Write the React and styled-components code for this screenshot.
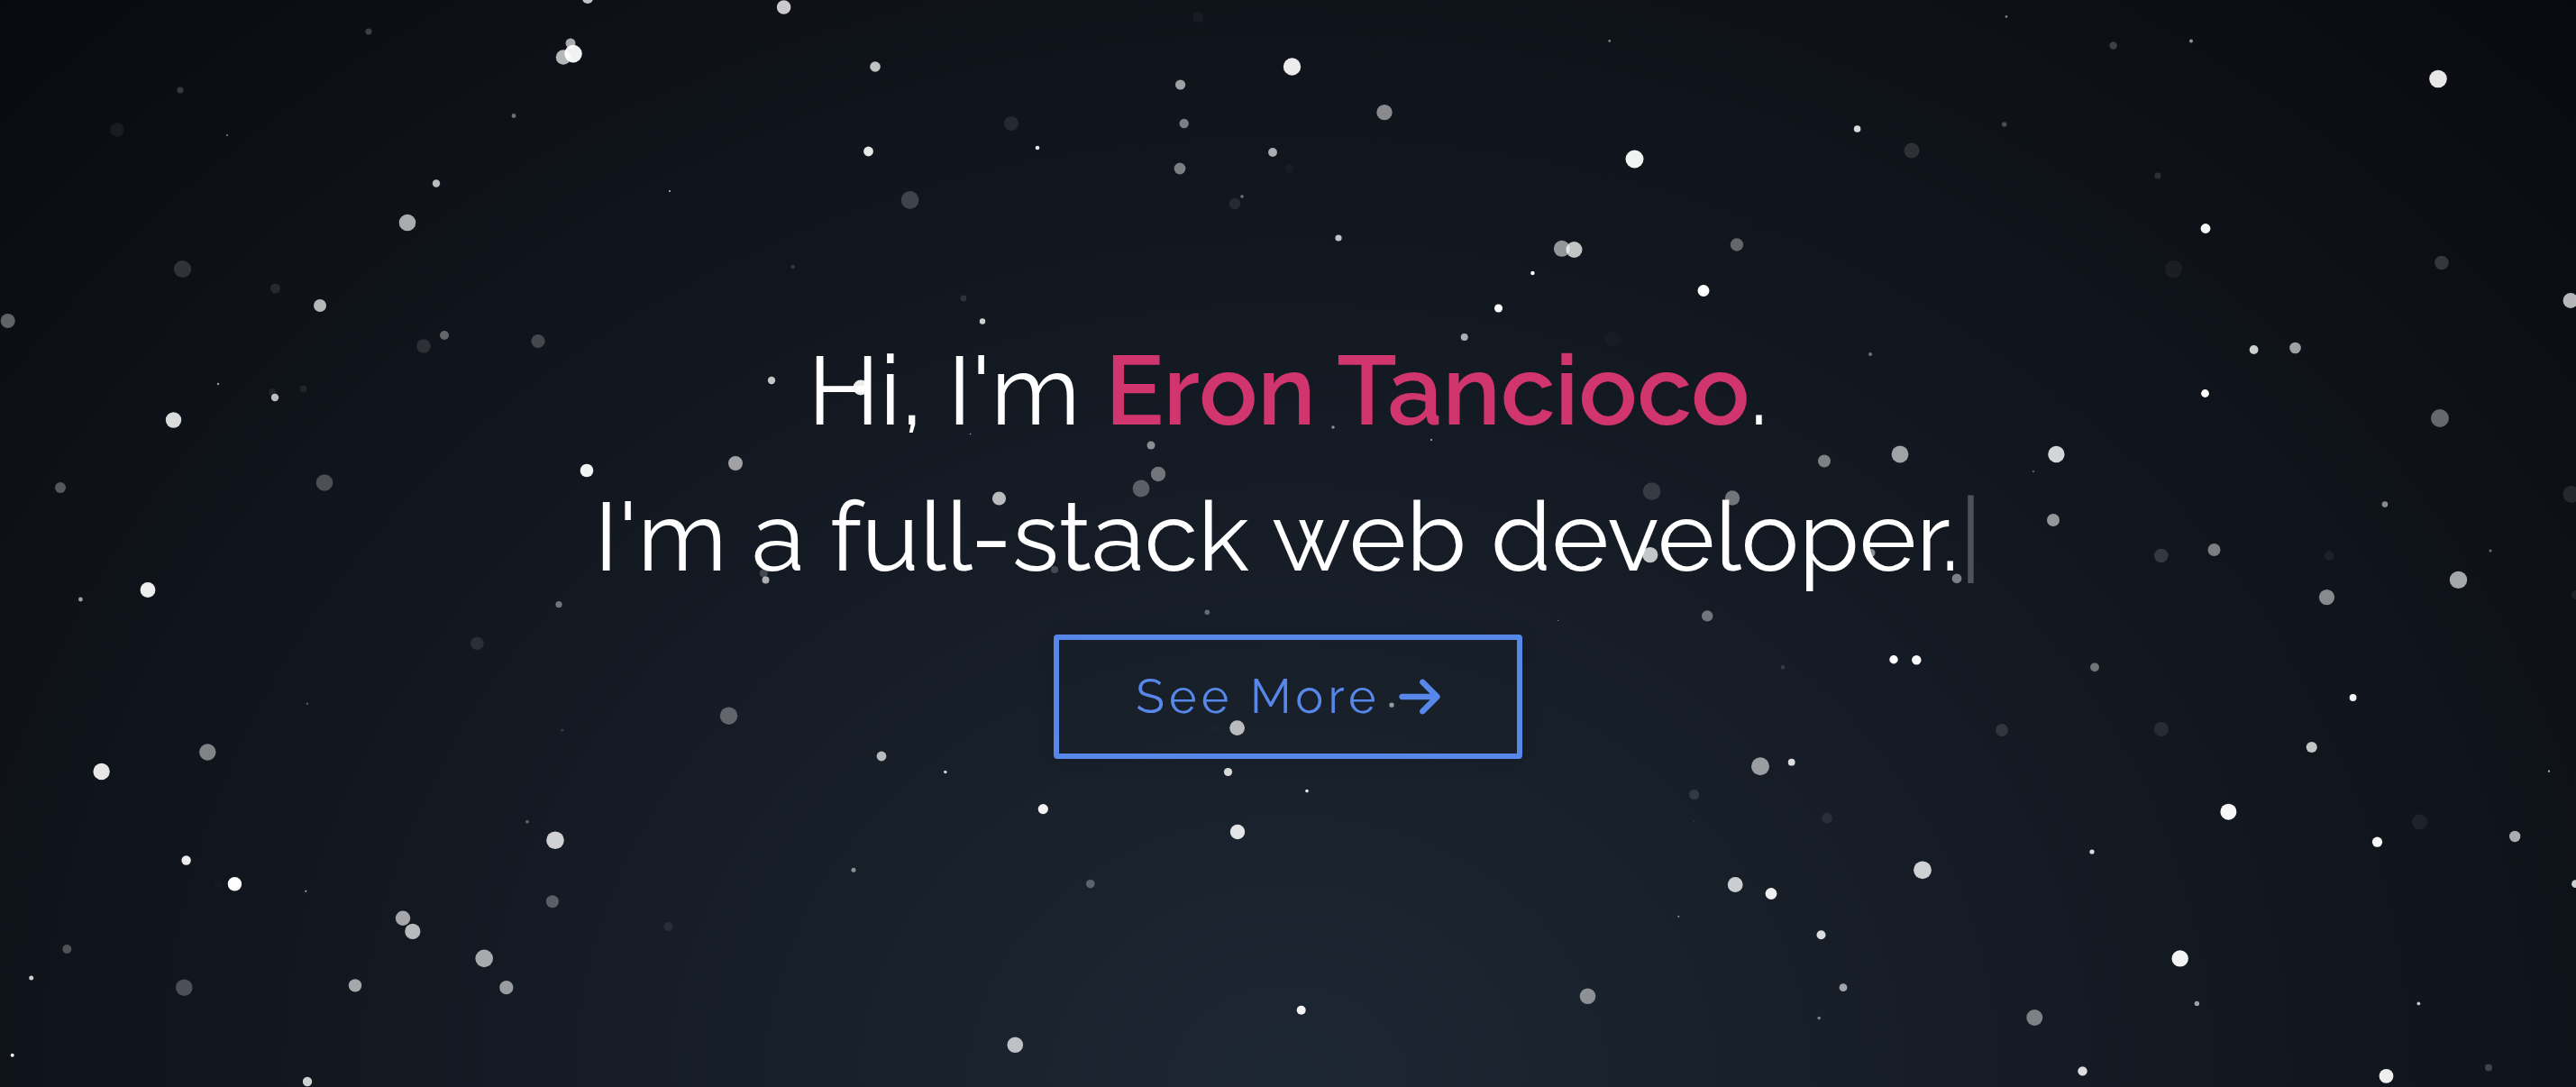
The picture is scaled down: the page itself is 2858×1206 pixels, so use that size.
import React from "react";
import styled, { createGlobalStyle } from "styled-components";
import { FaArrowRight } from "react-icons/fa6";

const GlobalStyle = createGlobalStyle`
  *, *::before, *::after {
    box-sizing: border-box;
  }

  body {
    margin: 0;
    background: #090a0f;
    font-family: Raleway, Lato, "Open Sans", sans-serif;
  }
`;

const Hero = styled.section`
  position: relative;
  display: flex;
  flex-direction: column;
  align-items: center;
  justify-content: center;
  gap: 28px;
  min-height: 100vh;
  padding-bottom: 12px;
  overflow: hidden;
  background: radial-gradient(ellipse at bottom, #1d2733 0%, #090a0f 100%);
`;

const Sky = styled.svg`
  position: absolute;
  inset: 0;
  width: 100%;
  height: 100%;
  pointer-events: none;
`;

const Title = styled.h1`
  position: relative;
  margin: 0;
  color: #fff;
  font-size: 108px;
  font-weight: 400;
  line-height: 162px;
  text-align: center;
`;

const Line = styled.span`
  display: block;
`;

const Name = styled.span`
  color: #d1356e;
  font-weight: 600;
`;

const Cursor = styled.span`
  opacity: 0.25;
`;

const MoreButton = styled.button`
  position: relative;
  display: inline-flex;
  align-items: center;
  gap: 20px;
  padding: 24px 85px;
  border: 6px solid #5787e8;
  border-radius: 4px;
  background: transparent;
  box-shadow: 0 4px 20px rgba(0, 0, 0, 0.15);
  color: #5787e8;
  font-family: inherit;
  font-size: 52px;
  font-weight: 400;
  letter-spacing: 0.1em;
  line-height: 78px;
  cursor: pointer;
`;

const ArrowIcon = styled(FaArrowRight)`
  flex: none;
  width: 46px;
  height: 52px;
`;

// Each star: x, y, radius, opacity
const STARS = [
  [409, 35, 3.6, 0.2], [200, 100, 3.6, 0.18], [130, 144, 7.8, 0.06], [252, 150, 1.2, 0.35],
  [652, -2, 6, 0.75], [633, 48, 5.5, 0.65], [625, 63.5, 8.3, 0.7], [636, 59.6, 9.8, 0.95],
  [570, 128.5, 2.4, 0.4], [484, 203.5, 4.2, 0.72], [452, 247, 9.3, 0.65], [202.5, 298.5, 9.6, 0.15],
  [305.5, 320, 5.5, 0.1], [355, 339, 7, 0.7], [8.7, 356, 8, 0.35], [470, 384, 7.7, 0.12],
  [493, 372, 5, 0.35], [597, 378.5, 7.6, 0.22], [242, 426, 1.2, 0.6], [302, 435, 4, 0.07],
  [305, 441, 4.2, 0.72], [336.5, 431.5, 4, 0.08], [192.5, 466, 8.7, 0.85], [67, 541, 6, 0.3],
  [360, 535.5, 9.3, 0.25], [651, 522, 7.3, 0.95],
  [869.6, 8, 7.8, 0.78], [971, 74, 5.8, 0.75], [1329, 19, 6, 0.04], [1309.6, 94, 5.6, 0.6],
  [1313.7, 137, 5.2, 0.45], [1122, 137, 8, 0.09], [1151, 164, 2.3, 0.9], [963.5, 168, 5.4, 0.9],
  [1412, 169, 4.9, 0.65], [1309, 187, 6.4, 0.45], [743, 212, 1.1, 0.7], [1009.6, 222, 9.9, 0.2],
  [1370, 226, 6.2, 0.09], [1378, 218, 1.8, 0.4], [879.6, 296, 2.2, 0.15], [1069, 331, 3.4, 0.12],
  [1090, 356.5, 3.2, 0.8], [856, 422, 4.2, 0.75], [955, 430, 8.5, 0.93], [1076.6, 481.5, 0.8, 0.6],
  [816, 514, 8, 0.6], [1277, 494, 4.5, 0.5], [1285, 526, 8.2, 0.4], [1266, 542, 9.4, 0.3],
  [1108.5, 553, 7.6, 0.7],
  [1433.5, 74, 9.7, 0.92], [1785.7, 45.4, 1.3, 0.5], [1536, 124.6, 8.7, 0.5], [2060.6, 143, 3.8, 0.85],
  [2121, 167, 8.6, 0.13], [1813.5, 176.5, 10, 0.95], [1431, 187, 5, 0.03], [1485, 264, 3.6, 0.75],
  [1732.8, 275.8, 9, 0.55], [1746.5, 277, 9, 0.75], [1927, 271.5, 7.2, 0.35], [1700.4, 303, 2.2, 1],
  [1890, 322.5, 6.5, 1], [1662.5, 342, 4.5, 1], [1624.7, 374, 4, 0.65], [1789, 376, 8.6, 0.02],
  [2075, 393, 2, 0.4], [1479, 474, 1.8, 0.5], [1588, 488, 1, 0.7], [2024, 511.5, 7, 0.45],
  [2108, 504, 9.4, 0.6], [1832.6, 545, 9.8, 0.15], [1922, 552.5, 8.2, 0.4],
  [2226, 18.5, 1.4, 0.45], [2344.6, 50.5, 4.2, 0.2], [2431, 45.4, 2, 0.55], [2223.7, 138, 2.8, 0.25],
  [2705, 87.5, 9.8, 0.9], [2394, 195, 3.6, 0.13], [2447, 253.5, 5.4, 0.97], [2411.5, 298.5, 9.8, 0.05],
  [2709, 291.5, 7.8, 0.17], [2852, 333.5, 8.4, 0.7], [2500.6, 388, 4.9, 0.8], [2546.5, 386, 6.3, 0.6],
  [2446.5, 436.5, 4.4, 1], [2707, 464, 10, 0.37], [2281.4, 504, 9.2, 0.82], [2256, 523, 1.2, 0.3],
  [2278, 577, 7, 0.55], [2646, 559.6, 3.3, 0.5], [2853, 548.5, 9.5, 0.1],
  [164, 654.5, 8.4, 0.93], [89.4, 665, 2.4, 0.6], [620, 670.7, 3.6, 0.4], [529.4, 713.8, 7.3, 0.1],
  [341, 780.7, 1.2, 0.3], [623.8, 810.3, 1.8, 0.12], [230.3, 834.5, 9.2, 0.47], [112.6, 856, 9.2, 0.9],
  [585, 911.8, 1.8, 0.35], [616, 932.2, 9.8, 0.8], [206.6, 954.5, 5.2, 0.93], [241.7, 981, 4.2, 0.02],
  [260.4, 980.7, 7.7, 1], [339.3, 988.8, 1, 0.7], [612.9, 1000.3, 7, 0.3], [447, 1018.8, 8.2, 0.62],
  [457.8, 1033.4, 8.6, 0.7], [74.3, 1053, 5, 0.27], [537.2, 1063.4, 9.8, 0.63], [34.7, 1085, 2.5, 0.8],
  [204.3, 1095.7, 9.3, 0.25], [394, 1093.4, 7.2, 0.62], [561.8, 1095.7, 7.6, 0.57], [13.7, 1170.7, 2, 0.95],
  [341, 1200, 5.2, 0.8],
  [847.2, 636, 4.5, 0.2], [849.5, 643.4, 4, 0.65], [1339.3, 679.2, 2.8, 0.35], [808.5, 794.2, 9.7, 0.33],
  [1372.6, 807.6, 8.4, 0.7], [1348, 807.6, 4.5, 0.015], [978, 839, 5.4, 0.7], [1048.8, 856.5, 1.8, 0.8],
  [1362.5, 856.5, 4.6, 0.85], [1157.3, 897.6, 5.6, 0.95], [1373, 923, 8.2, 0.88], [947, 965.3, 2.5, 0.5],
  [1209.8, 980.7, 4.8, 0.3], [741.4, 1028, 5, 0.08], [1126.3, 1159.2, 8.8, 0.72],
  [1170, 632, 4, 0.2], [1830.8, 615.7, 8.6, 0.75], [1550, 620, 3, 0.1], [2076, 613.5, 4.5, 0.5],
  [1894.2, 683.4, 6.2, 0.4], [1728.7, 688.4, 0.6, 0.5], [1978, 740.3, 2.4, 0.13], [2101, 731.8, 4.7, 1],
  [2126.3, 732.2, 5.2, 0.98], [1544, 782.2, 2.6, 0.55], [1953, 850.3, 10, 0.57], [1987.7, 845.7, 3.9, 0.85],
  [1450, 877.6, 1.8, 0.9], [1879.6, 881.5, 5.5, 0.12], [1879.6, 911.8, 0.7, 0.15], [2027, 907.6, 5.9, 0.08],
  [2133, 965.3, 9.9, 0.8], [1925.2, 981.5, 8.4, 0.78], [1965, 991.5, 6.4, 0.93], [1862.3, 1016.8, 1.1, 0.5],
  [2020.5, 1037.2, 5, 0.85], [2045, 1095.7, 4.4, 0.6], [1761.5, 1105.3, 8.8, 0.5], [2018.2, 1129.5, 1.8, 0.45],
  [1443.7, 1120.7, 5, 0.95],
  [2171, 641.8, 5.4, 0.45], [2397.8, 616.5, 7.8, 0.15], [2456.5, 610, 7, 0.45], [2584.2, 616.5, 5.2, 0.06],
  [2763, 611, 1.5, 0.4], [2581.5, 662.6, 8.6, 0.5], [2727.5, 643.4, 9.7, 0.63], [2858, 660, 5, 0.07],
  [2324, 740.3, 4.9, 0.4], [2221, 810, 6.9, 0.13], [2610.6, 774, 3.9, 0.95], [2397.8, 809, 8, 0.09],
  [2564.7, 829, 6.1, 0.75], [2828, 855.7, 1.1, 0.7], [2472.4, 900.7, 9, 0.97], [2684.7, 911.8, 8.6, 0.06],
  [2637.5, 934.2, 5.6, 0.98], [2790.2, 928, 6.2, 0.65], [2321, 945, 2.6, 0.85], [2857.5, 980.7, 4.4, 0.8],
  [2418.7, 1063.4, 9.2, 0.95], [2437.4, 1113.4, 2.7, 0.6], [2683.4, 1113.4, 1.9, 0.75], [2257.3, 1129, 9, 0.45],
  [2310.5, 1188.4, 5.2, 0.85], [2647.5, 1193.8, 7.9, 0.93], [2761, 1184.5, 4, 0.2],
];

function StarField() {
  return (
    <Sky viewBox="0 0 2858 1206" preserveAspectRatio="xMidYMid slice" aria-hidden="true">
      {STARS.map(([x, y, r, opacity], i) => (
        <circle key={i} cx={x} cy={y} r={r} fill="#fff" fillOpacity={opacity} />
      ))}
    </Sky>
  );
}

export default function App() {
  return (
    <>
      <GlobalStyle />
      <Hero>
        <StarField />
        <Title>
          <Line>
            Hi, I'm <Name>Eron Tancioco</Name>.
          </Line>
          <Line>
            I'm a full-stack web developer.<Cursor aria-hidden="true">|</Cursor>
          </Line>
        </Title>
        <MoreButton type="button">
          See More
          <ArrowIcon aria-hidden="true" />
        </MoreButton>
      </Hero>
    </>
  );
}
